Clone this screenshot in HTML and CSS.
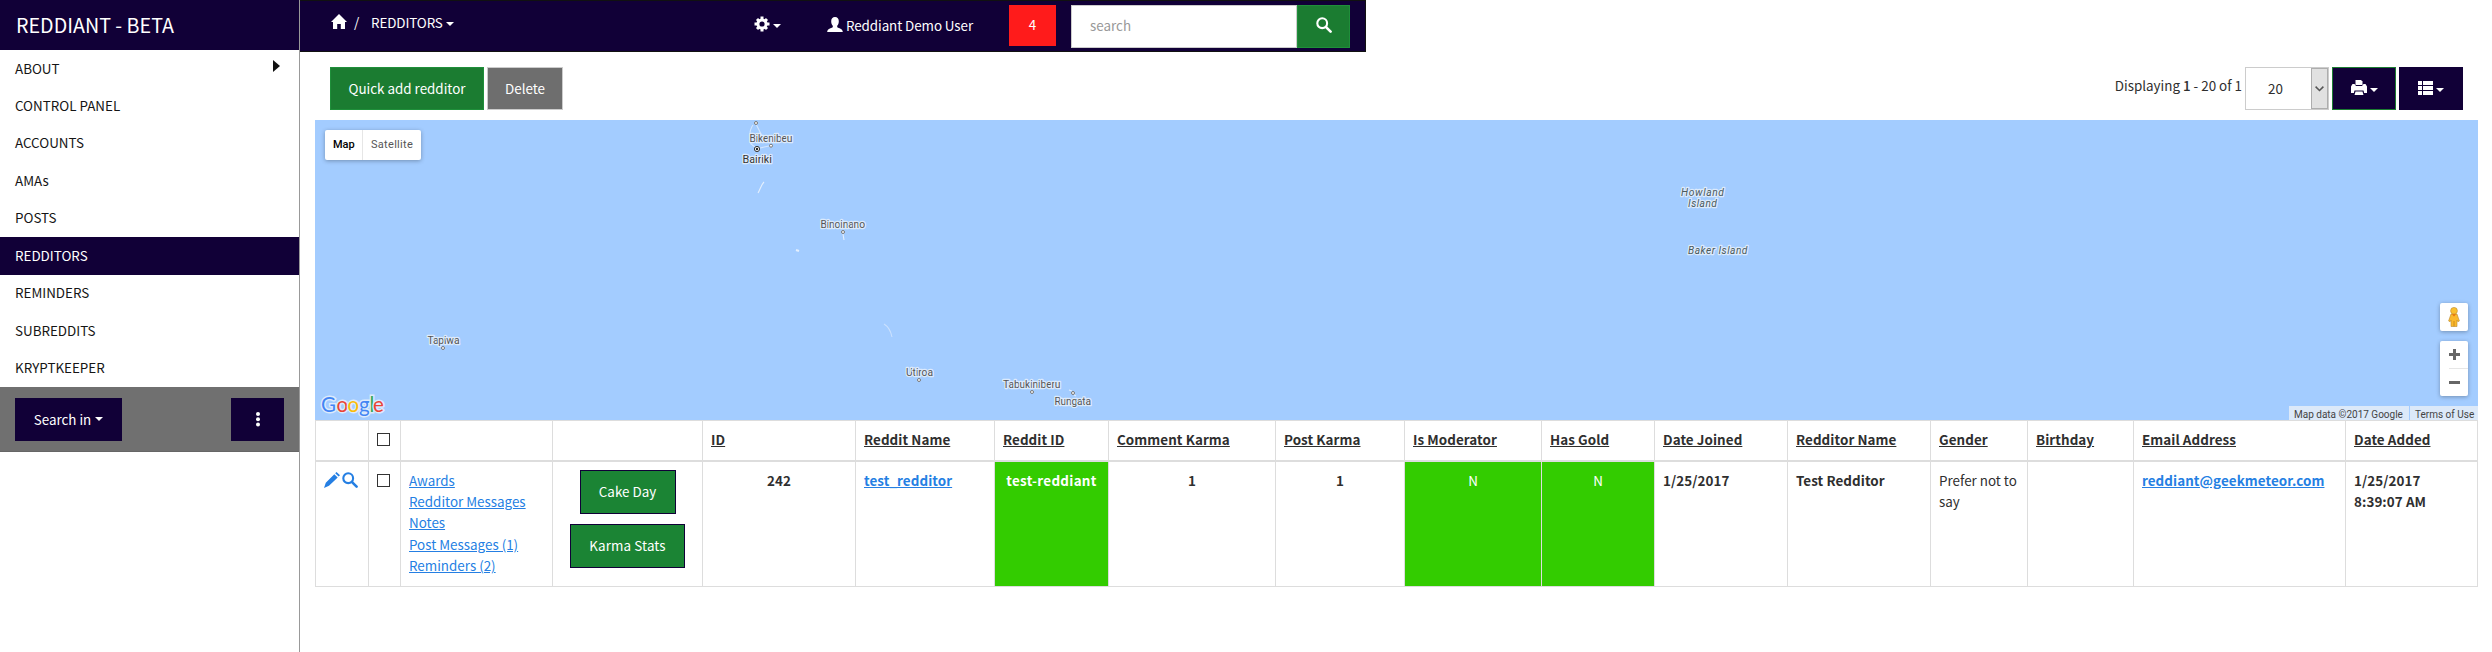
FILE: index.html
```html
<!DOCTYPE html>
<html lang="en">
<head>
<meta charset="utf-8">
<title>Reddiant - Redditors</title>
<link rel="stylesheet" href="styles.css">
</head>
<body>
<svg class="defs" width="0" height="0">
  <symbol id="i-search" viewBox="0 0 16 16"><circle cx="6.2" cy="6.2" r="4.9" fill="none" stroke="currentColor" stroke-width="2.1"/><path d="M9.8 9.8l4.8 4.8" stroke="currentColor" stroke-width="2.6" stroke-linecap="round"/></symbol>
</svg>
<div class="app">
  <aside class="sidebar">
    <div class="brand"><span>REDDIANT - BETA</span></div>
    <nav class="menu">
      <a class="menu-item"><span>ABOUT</span><i class="arrow"></i></a>
      <a class="menu-item"><span>CONTROL PANEL</span></a>
      <a class="menu-item"><span>ACCOUNTS</span></a>
      <a class="menu-item"><span>AMAs</span></a>
      <a class="menu-item"><span>POSTS</span></a>
      <a class="menu-item active"><span>REDDITORS</span></a>
      <a class="menu-item"><span>REMINDERS</span></a>
      <a class="menu-item"><span>SUBREDDITS</span></a>
      <a class="menu-item"><span>KRYPTKEEPER</span></a>
    </nav>
    <div class="side-tools">
      <button class="btn navy search-in"><span>Search in</span><i class="caret"></i></button>
      <button class="btn navy kebab" aria-label="More"><svg width="4" height="15" viewBox="0 0 4 15" fill="#fff"><circle cx="2" cy="2" r="2"/><circle cx="2" cy="7.3" r="2"/><circle cx="2" cy="12.6" r="2"/></svg></button>
    </div>
  </aside>
  <main class="main">
    <header class="navbar">
      <div class="crumbs">
        <svg class="home" width="16" height="15" viewBox="0 0 16 15" fill="#fff"><path d="M8 0l8 8h-2V15H9.800v-5H6.200v5H2V8H0z"/></svg>
        <span class="slash">/</span>
        <span class="crumb">REDDITORS</span><i class="caret"></i>
      </div>
      <div class="gear">
        <svg width="16" height="16" viewBox="0 0 16 16"><path d="M8 .5v15M.5 8h15M3 3l10 10M13 3L3 13" stroke="#fff" stroke-width="3"/><circle cx="8" cy="8" r="4.100" fill="#110037" stroke="#fff" stroke-width="3"/></svg><i class="caret"></i>
      </div>
      <div class="user">
        <svg width="16" height="15" viewBox="0 0 16 15" fill="#fff"><path d="M8 0c2.500 0 3.800 1.700 3.800 4.200 0 2-.7 3.600-1.600 4.500v1.500c1.500.9 5.600 1.500 5.600 4.800H.2c0-3.300 4.100-3.900 5.600-4.800V8.700c-.9-.9-1.600-2.500-1.600-4.500C4.200 1.700 5.500 0 8 0z"/></svg>
        <span>Reddiant Demo User</span>
      </div>
      <div class="count"><span>4</span></div>
      <div class="search">
        <div class="search-box"><span>search</span></div>
        <button class="btn green search-btn" aria-label="Search"><svg width="16" height="16"><use href="#i-search"/></svg></button>
      </div>
    </header>
    <div class="toolbar">
      <button class="btn green quick"><span>Quick add redditor</span></button>
      <button class="btn gray delete"><span>Delete</span></button>
      <div class="toolbar-right">
        <span class="displaying">Displaying <b>1</b> - 20 of 1</span>
        <div class="select"><span>20</span><i class="select-arrow"><svg width="9" height="6" viewBox="0 0 9 6" fill="none" stroke="#555" stroke-width="1.500"><path d="M.6.6l3.900 3.900L8.400.6"/></svg></i></div>
        <button class="btn navy print" aria-label="Print"><svg width="16" height="15" viewBox="0 0 16 15"><path d="M4.500 0h5.500l1.500 1.500V5h-7z" fill="#fff"/><path d="M1.500 4h2l1.500 2h6l1.500-2h2L16 6.500V13h-3l-1-2H4l-1 2H0V6.500z" fill="#fff"/><path d="M3.500 10.500h9l1 4.500h-11z" fill="#110037"/><path d="M4.500 11.500h7l1 3.500h-9z" fill="#fff"/></svg><i class="caret"></i></button>
        <button class="btn navy list" aria-label="Columns"><svg width="15" height="14" viewBox="0 0 15 14" fill="#fff"><path d="M0 0h4v4H0zM5 0h10v4H5zM0 5h4v4H0zM5 5h10v4H5zM0 10h4v4H0zM5 10h10v4H5z"/></svg><i class="caret"></i></button>
      </div>
    </div>
    <div class="content">
      <section class="map">
        <svg class="map-canvas" width="2162" height="300" viewBox="315 120 2162 300">
          <g fill="none" stroke="#e4effd" stroke-width="1.100">
            <path d="M756 124l3 6 4 8M753 125c-3 4-4 11-2 19l4 3M760 148l9-2" opacity=".75"/>
            <path d="M764 182c-3 3-4 8-6 11M843 234l1 6"/>
            <path d="M796 250l3 1" stroke-width="2"/>
            <path d="M884 324c5 3 7 8 8 13" opacity=".6"/>
            <path d="M1069 390l3 1M1074 395l2 1"/>
          </g>
          <g fill="#fff" stroke="#777" stroke-width="1">
            <circle cx="756" cy="123" r="1.500"/><circle cx="771" cy="145.700" r="1.500"/><circle cx="843" cy="232" r="1.500"/><circle cx="919" cy="380" r="1.500"/><circle cx="1032" cy="392" r="1.500"/><circle cx="1073" cy="393" r="1.500"/><circle cx="443" cy="348" r="1.500"/>
          </g>
          <circle cx="757" cy="149" r="2.600" fill="#fff" stroke="#333"/><circle cx="757" cy="149" r="1.200" fill="#222"/>
          <g class="place">
            <text x="749.500" y="141.500" textLength="43">Bikenibeu</text>
            <text class="capital" x="742.500" y="163" textLength="29.500">Bairiki</text>
            <text x="820.500" y="228" textLength="44.500">Binoinano</text>
            <text x="906" y="376" textLength="27">Utiroa</text>
            <text x="1003" y="388" textLength="57.500">Tabukiniberu</text>
            <text x="1054.500" y="405" textLength="36.500">Rungata</text>
            <text x="427.500" y="344" textLength="32">Tapiwa</text>
            <g class="island">
              <text x="1681" y="196" textLength="43">Howland</text>
              <text x="1688" y="207" textLength="29">Island</text>
              <text x="1688" y="254" textLength="59.500">Baker Island</text>
            </g>
          </g>
          <text class="google" y="412"><tspan x="321" fill="#4285f4">G</tspan><tspan x="336.500" fill="#ea4335">o</tspan><tspan x="347.500" fill="#fbbc05">o</tspan><tspan x="359" fill="#4285f4">g</tspan><tspan x="369.500" fill="#34a853">l</tspan><tspan x="373" fill="#ea4335">e</tspan></text>
        </svg>
        <div class="map-types"><div class="map-type on"><span>Map</span></div><div class="map-type sat"><span>Satellite</span></div></div>
        <div class="map-ctrls">
          <div class="pegman"><svg width="12" height="20" viewBox="0 0 12 20"><path d="M3 7h6l2.400 7-1.500.8L9 13v6.500H3V13l-.9 1.800L.6 14z" fill="#fbb92a" stroke="#b98a35" stroke-width=".6"/><circle cx="6" cy="3.800" r="3.400" fill="#fbc02d" stroke="#b98a35" stroke-width=".6"/><path d="M4 7.200h4L6 9.500z" fill="#e8710a"/><path d="M6 14v5.500" stroke="#c98a20"/></svg></div>
          <div class="zoom"><i class="plus"></i><i class="line"></i><i class="minus"></i></div>
        </div>
        <div class="credits"><span class="credit data">Map data ©2017 Google</span><span class="credit terms">Terms of Use</span></div>
      </section>
      <table class="grid">
        <colgroup><col style="width:53px"><col style="width:32px"><col style="width:152px"><col style="width:150px"><col style="width:153px"><col style="width:139px"><col style="width:114px"><col style="width:167px"><col style="width:129px"><col style="width:137px"><col style="width:113px"><col style="width:133px"><col style="width:143px"><col style="width:97px"><col style="width:106px"><col style="width:212px"><col style="width:132px"></colgroup>
        <thead><tr>
          <th></th><th class="check"><i class="box"></i></th><th></th><th></th>
          <th><u>ID</u></th><th><u>Reddit Name</u></th><th><u>Reddit ID</u></th><th><u>Comment Karma</u></th><th><u>Post Karma</u></th><th><u>Is Moderator</u></th><th><u>Has Gold</u></th><th><u>Date Joined</u></th><th><u>Redditor Name</u></th><th><u>Gender</u></th><th><u>Birthday</u></th><th><u>Email Address</u></th><th><u>Date Added</u></th>
        </tr></thead>
        <tbody><tr>
          <td class="actions"><div class="icons"><svg width="16" height="16" viewBox="0 0 16 16" fill="#257fe3"><path d="M12.500 0L16 3.200 14.600 4.600 11.200 1.300zM10.300 2.200l3.400 3.300-8.700 8.300L0 16l1.800-5.200z"/></svg><svg width="16" height="16"><use href="#i-search"/></svg></div></td>
          <td class="check"><i class="box"></i></td>
          <td class="links"><a>Awards</a><a>Redditor Messages</a><a>Notes</a><a>Post Messages (1)</a><a>Reminders (2)</a></td>
          <td class="stats"><div class="stack"><button class="btn stat cake"><span>Cake Day</span></button><button class="btn stat karma"><span>Karma Stats</span></button></div></td>
          <td class="strong mid"><span>242</span></td>
          <td class="strong"><a>test_redditor</a></td>
          <td class="strong mid lime wide"><span>test-reddiant</span></td>
          <td class="strong mid">1</td>
          <td class="strong mid">1</td>
          <td class="mid lime">N</td>
          <td class="mid lime">N</td>
          <td class="strong"><span>1/25/2017</span></td>
          <td class="strong"><span>Test Redditor</span></td>
          <td>Prefer not to say</td>
          <td></td>
          <td class="strong"><a>reddiant@geekmeteor.com</a></td>
          <td class="strong"><span>1/25/2017 8:39:07 AM</span></td>
        </tr></tbody>
      </table>
    </div>
  </main>
</div>
</body>
</html>
```
FILE: styles.css
```css
* { box-sizing: border-box; }
body { margin: 0; background: #fff; color: #2f2f2f; font: 13.4px/21.43px "Noto Sans CJK SC", "Open Sans", sans-serif; }
.defs { position: absolute; }
.app { display: flex; height: 652px; overflow: hidden; }
.sidebar { width: 300px; flex: none; border-right: 1px solid #999; }
.brand { height: 50px; background: #110037; color: #fff; padding: 0 16px; display: flex; align-items: center; font-size: 19.7px; }
.menu-item { display: flex; justify-content: space-between; height: 37.44px; align-items: center; padding: 0 19px 1px 15px; color: #151515; }
.menu-item.active { background: #110037; color: #fff; }
.arrow { border: 6.5px solid transparent; border-left: 7px solid #111; border-right: 0; margin-top: -4px; }
.side-tools { height: 65px; background: #707070; border-bottom: 1px solid #666; padding: 11px 15px; display: flex; justify-content: space-between; }
.btn { font: inherit; color: #fff; border: 1px solid transparent; height: 43px; padding: 0; display: flex; align-items: center; justify-content: center; white-space: nowrap; flex: none; }
.navy { background: #110037; border-color: #110037; }
.green { background: #1b7c31; border-color: #1f8f3a; }
.gray { background: #6e6e6e; border-color: #ccc; }
.caret { border: 4px solid transparent; border-top-color: #fff; border-bottom: 0; margin-left: 4px; flex: none; }
.search-in { width: 107px; }
.kebab { width: 53px; }
.main { flex: 1; }
.navbar { width: 1066px; height: 52px; background: #110037; border: 1px solid #111; border-left: 0; color: #fff; display: flex; align-items: flex-start; }
.crumbs { display: flex; align-items: center; width: 454px; padding: 11px 0 0 31px; }
.home { margin-top: -3px; }
.slash { width: 24px; padding-left: 7px; }
.crumbs .caret, .gear .caret { margin-left: 3px; margin-top: 3px; }
.crumb { letter-spacing: -.1px; }
.gear { display: flex; align-items: center; width: 73px; padding-top: 15px; }
.user { display: flex; align-items: center; width: 182px; padding-top: 14px; gap: 3px; white-space: nowrap; letter-spacing: -.08px; }
.user svg { margin-top: -2px; }
.count { width: 47px; height: 41px; margin: 4px 15px 0 0; background: #ff1b1b; display: flex; align-items: center; justify-content: center; padding-bottom: 1px; }
.search { display: flex; margin-top: 4px; }
.search-box { width: 226px; height: 43px; background: #fff; border: 1px solid #ccc; color: #999; display: flex; align-items: center; padding: 0 0 2px 18px; }
.search-btn { width: 53px; padding-bottom: 3px; }
.toolbar { display: flex; height: 68px; padding: 15px 30px 0; }
.quick { width: 154px; margin-right: 3px; }
.delete { width: 76px; }
.toolbar-right { margin-left: auto; display: flex; gap: 3px; }
.displaying { padding-top: 8px; white-space: nowrap; }
.displaying b { font-weight: 500; }
.select { width: 84px; height: 43px; border: 1px solid #ccc; display: flex; justify-content: space-between; align-items: center; padding-left: 22px; }
.select-arrow { width: 17px; height: 41px; background: #e1e1e1; border: 1px solid #adadad; display: flex; align-items: center; justify-content: center; }
.print { width: 64px; border-color: #1b7c31; }
.list { width: 64px; }
.print .caret, .list .caret { margin-left: 3px; margin-top: 2px; }
.print svg, .list svg { margin-top: -2px; }
.content { padding: 0 15px; }
.map { position: relative; height: 300px; background: #a3ccff; font-family: Roboto, "Liberation Sans", sans-serif; }
.map-canvas { display: block; }
.place text { font-size: 10.3px; fill: #555; stroke: #dceafc; stroke-width: 2.5px; paint-order: stroke; stroke-linejoin: round; }
.place .capital { font-size: 11px; fill: #333; }
.place .island text { font-style: italic; fill: #4b5a5c; }
.google { font: 20.5px Lato, sans-serif; stroke: #dceafc; stroke-width: 3px; paint-order: stroke; }
.map-types { position: absolute; left: 10px; top: 10px; display: flex; height: 30px; background: #fff; border-radius: 2px; box-shadow: 0 1px 4px rgba(0,0,0,.3); font-size: 11px; line-height: 30px; color: #565656; }
.map-type { width: 38px; padding-left: 8px; }
.map-type.on { font-weight: 500; color: #000; border-right: 1px solid #e6e6e6; }
.map-type.sat { width: 58px; letter-spacing: .3px; }
.map-ctrls { position: absolute; right: 10px; top: 183px; width: 28px; display: flex; flex-direction: column; gap: 10px; }
.pegman, .zoom { background: #fff; border-radius: 2px; box-shadow: 0 1px 4px rgba(0,0,0,.3); }
.pegman { height: 28px; display: flex; align-items: center; justify-content: center; padding-bottom: 1px; }
.zoom { height: 55px; display: flex; flex-direction: column; align-items: center; padding-top: 8px; }
.plus { width: 11px; height: 11px; background: linear-gradient(#666, #666) center / 11px 3px no-repeat, linear-gradient(#666, #666) center / 3px 11px no-repeat; }
.line { width: 19px; height: 1px; background: #e6e6e6; margin: 8px 0 12px 9px; }
.minus { width: 11px; height: 3px; background: #666; }
.credits { position: absolute; right: 0; bottom: 0; display: flex; gap: 1px; height: 14px; font-size: 10px; line-height: 17px; color: #444; white-space: nowrap; }
.credit { background: #dce9f9; padding-left: 5px; }
.data { width: 120px; }
.terms { width: 68px; padding-left: 5px; }
.grid { width: 2162px; table-layout: fixed; border-collapse: separate; border-spacing: 0; border-right: 1px solid #ddd; border-top: 1px solid #ddd; }
th, td { border-left: 1px solid #ddd; padding: 8px; text-align: left; vertical-align: top; }
th { height: 41px; border-bottom: 2px solid #ddd; font-weight: 700; white-space: nowrap; letter-spacing: .08px; }
td { height: 125px; border-bottom: 1px solid #ddd; padding-top: 7.5px; }
.check { padding: 12px 0 0 8px; }
.box { display: block; width: 13px; height: 13px; border: 1px solid #333; }
.actions { color: #257fe3; }
.icons { display: flex; gap: 2px; padding-top: 2px; }
a { color: #257fe3; text-decoration: underline; }
.menu-item { text-decoration: none; }
.links a { display: block; }
.stats .stack { display: flex; flex-direction: column; align-items: center; gap: 10px; }
.stat { height: 44px; background: #1b8434; border-color: #110037; }
.cake { width: 96px; }
.karma { width: 115px; letter-spacing: .12px; }
.strong { font-weight: 700; letter-spacing: .08px; }
.mid { text-align: center; }
.lime { background: #33cc00; color: #fff; }
td.lime { padding-left: 0; padding-right: 0; }
.wide { letter-spacing: .3px; }
```
